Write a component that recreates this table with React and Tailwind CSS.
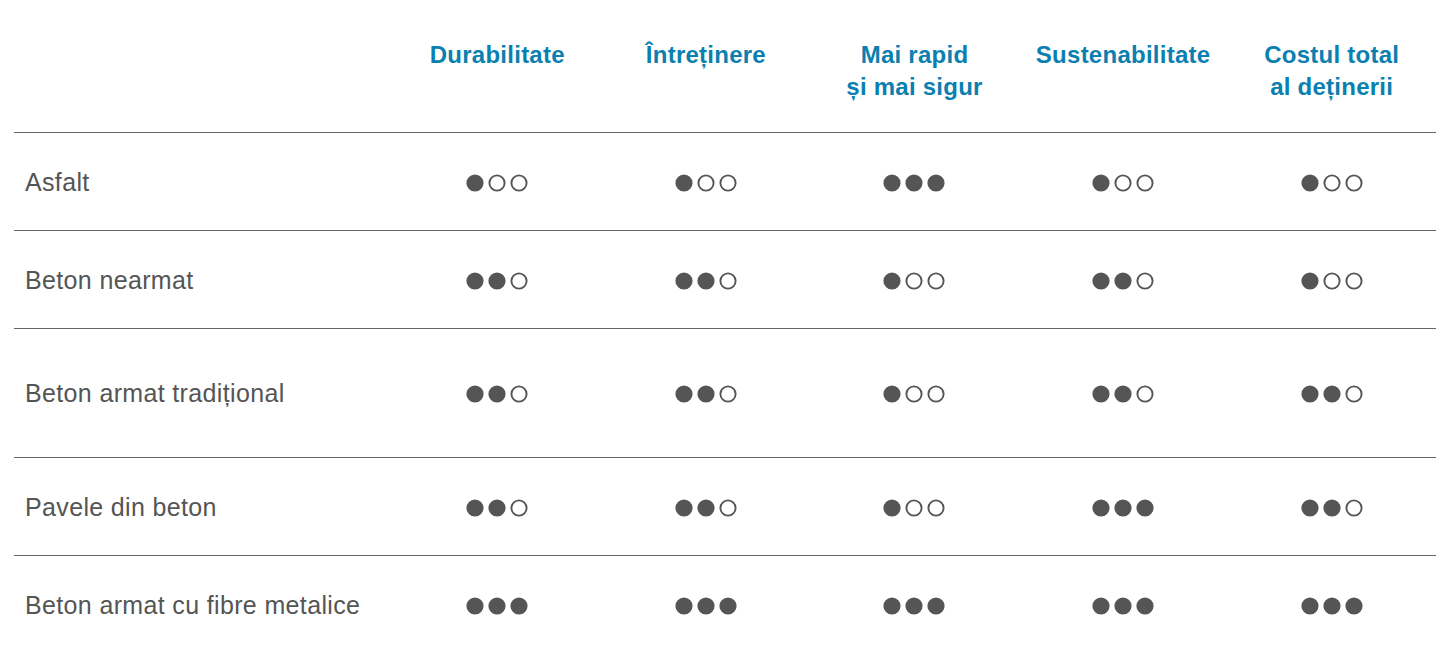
import React from "react";

const cols = [
  ["Durabilitate"],
  ["Întreținere"],
  ["Mai rapid", "și mai sigur"],
  ["Sustenabilitate"],
  ["Costul total", "al deținerii"],
];

const rows = [
  { label: "Asfalt", v: [1, 1, 3, 1, 1], h: "h-[98px]" },
  { label: "Beton nearmat", v: [2, 2, 1, 2, 1], h: "h-[98px]" },
  { label: "Beton armat tradițional", v: [2, 2, 1, 2, 2], h: "h-[129px]" },
  { label: "Pavele din beton", v: [2, 2, 1, 3, 2], h: "h-[98px]" },
  { label: "Beton armat cu fibre metalice", v: [3, 3, 3, 3, 3], h: "h-[98px]" },
];

function Dot({ filled }) {
  return (
    <svg width="18" height="18" viewBox="0 0 18 18" className="block">
      {filled ? (
        <circle cx="9" cy="9" r="8.6" fill="#555555" />
      ) : (
        <circle cx="9" cy="9" r="7.6" fill="none" stroke="#555555" strokeWidth="1.9" />
      )}
    </svg>
  );
}

function Dots({ n }) {
  return (
    <div className="flex items-center justify-center gap-[4px]">
      {[0, 1, 2].map((i) => (
        <Dot key={i} filled={i < n} />
      ))}
    </div>
  );
}

export default function App() {
  return (
    <div
      className="w-[1453px] h-[649px] overflow-hidden bg-white"
      style={{ fontFamily: '"Liberation Sans", Arial, sans-serif' }}
    >
      <div className="ml-[14px] w-[1422px]">
        <div className="grid grid-cols-[379px_repeat(5,1fr)] h-[133px] border-b border-[#666666] pt-[39px]">
          <div />
          {cols.map((c, i) => (
            <div
              key={i}
              className="text-center font-bold text-[24px] leading-[32px] tracking-[0.25px] text-[#0b80b0]"
            >
              {c.map((l, j) => (
                <div key={j}>{l}</div>
              ))}
            </div>
          ))}
        </div>
        {rows.map((r, i) => (
          <div
            key={i}
            className={`grid grid-cols-[379px_repeat(5,1fr)] items-center ${r.h} ${
              i < rows.length - 1 ? "border-b border-[#666666]" : ""
            }`}
          >
            <div className="pl-[11px] text-[25px] leading-[28px] tracking-[0.35px] text-[#555555]">
              {r.label}
            </div>
            {r.v.map((n, j) => (
              <div key={j} className="pt-[2px]">
                <Dots n={n} />
              </div>
            ))}
          </div>
        ))}
      </div>
    </div>
  );
}
